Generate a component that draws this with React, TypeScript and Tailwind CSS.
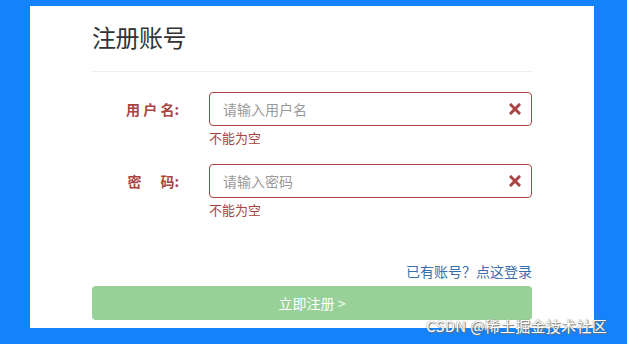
import React from "react";

const font = { fontFamily: '"Noto Sans CJK SC", "Noto Sans", sans-serif' };

function XIcon() {
  return (
    <svg width="12" height="12" viewBox="0 0 12 12" className="shrink-0">
      <path d="M2 2 L10 10 M10 2 L2 10" stroke="#a94442" strokeWidth="3" strokeLinecap="square" />
    </svg>
  );
}

function Field({ label, placeholder, type }: { label: React.ReactNode; placeholder: string; type: string }) {
  return (
    <div className="flex">
      <div className="w-[87px] h-[34px] flex items-center justify-end text-[14px] font-bold text-[#a94442] whitespace-pre">
        {label}
      </div>
      <div className="ml-[30px] flex-1 flex flex-col">
        <div className="h-[34px] border border-[#a94442] rounded-[4px] flex items-center pl-[13px] pr-[10px]">
          <input
            type={type}
            placeholder={placeholder}
            className="flex-1 bg-transparent outline-none text-[14px] text-[#555] placeholder:text-[#999]"
            style={font}
          />
          <XIcon />
        </div>
        <div className="mt-[4px] text-[13px] leading-[16px] text-[#a94442]">不能为空</div>
      </div>
    </div>
  );
}

export default function App() {
  return (
    <div className="w-[627px] h-[344px] bg-[#1482fa] pt-[6px] pl-[30px] overflow-hidden relative" style={font}>
      <div className="w-[564px] h-[322px] bg-white pl-[62px] pr-[62px]">
        <div className="pt-[15px] pb-[18px] border-b border-[#eeeeee]">
          <h1 className="text-[24px] leading-[32px] text-[#333] font-normal tracking-[-0.5px]">注册账号</h1>
        </div>
        <div className="pt-[20px] flex flex-col gap-[18px]">
          <Field label={"用 户 名:"} placeholder="请输入用户名" type="text" />
          <Field label={"密      码:"} placeholder="请输入密码" type="password" />
        </div>
        <div className="mt-[43px] flex justify-end text-[14px] leading-[20px] text-[#3a6ea8]">已有账号？点这登录</div>
        <div className="mt-[5px] h-[34px] rounded-[4px] bg-[#98d198] flex items-center justify-center text-[14px] text-white">
          立即注册 &gt;
        </div>
      </div>
      <div
        className="absolute left-[426px] top-[316px] text-[15px] leading-[20px] text-white tracking-[0.3px]"
        style={{ textShadow: "0 0 1px #666, 1px 1px 1px #777" }}
      >
        CSDN @稀土掘金技术社区
      </div>
    </div>
  );
}
